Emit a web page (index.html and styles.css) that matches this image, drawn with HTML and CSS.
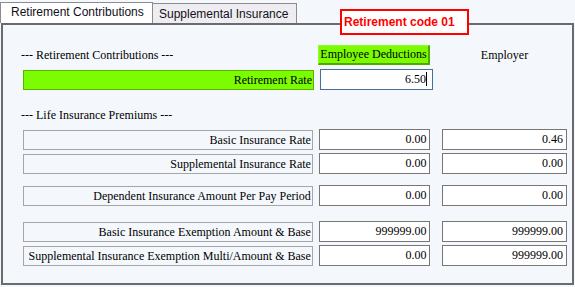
FILE: index.html
```html
<!DOCTYPE html>
<html lang="en">

<head>
    <meta charset="UTF-8">
    <title>Retirement Contributions</title>
    <link rel="stylesheet" href="styles.css">
</head>

<body>
    <div class="tabs">
        <div class="tab tab-active">Retirement Contributions</div>
        <div class="tab tab-other">Supplemental Insurance</div>
    </div>

    <div class="panel">
        <div class="row row-head">
            <div class="section-title">--- Retirement Contributions ---</div>
            <div class="col1 btn-green">Employee Deductions</div>
            <div class="col2 col-title">Employer</div>
        </div>
        <div class="row row-retire">
            <div class="label label-green">Retirement Rate</div>
            <div class="col1 field field-focus">6.50<span class="caret"></span></div>
        </div>

        <div class="section-title life-title">--- Life Insurance Premiums ---</div>

        <div class="row row-basic">
            <div class="label">Basic Insurance Rate</div>
            <div class="col1 field">0.00</div>
            <div class="col2 field">0.46</div>
        </div>
        <div class="row row-tight">
            <div class="label">Supplemental Insurance Rate</div>
            <div class="col1 field">0.00</div>
            <div class="col2 field">0.00</div>
        </div>
        <div class="row row-dep">
            <div class="label">Dependent Insurance Amount Per Pay Period</div>
            <div class="col1 field">0.00</div>
            <div class="col2 field">0.00</div>
        </div>
        <div class="row row-exempt">
            <div class="label">Basic Insurance Exemption Amount &amp; Base</div>
            <div class="col1 field">999999.00</div>
            <div class="col2 field">999999.00</div>
        </div>
        <div class="row row-tight">
            <div class="label">Supplemental Insurance Exemption Multi/Amount &amp; Base</div>
            <div class="col1 field">0.00</div>
            <div class="col2 field">999999.00</div>
        </div>
    </div>

    <div class="code-badge">Retirement code 01</div>
</body>

</html>
```

FILE: styles.css
```css
* {
    box-sizing: border-box;
}

body {
    margin: 0;
    position: relative;
    background-color: #f4f8fc;
    font-family: 'Liberation Serif', 'Times New Roman', serif;
    font-size: 12px;
    color: #000;
}

/* tabs */
.tabs {
    display: flex;
    align-items: flex-end;
    height: 23px;
}

.tab {
    font-family: 'Liberation Sans', Arial, sans-serif;
    font-size: 12px;
    color: #101020;
    white-space: nowrap;
}

.tab-active {
    width: 153px;
    height: 21px;
    padding-left: 10px;
    line-height: 19px;
    background-color: #fff;
    border-top: 1px solid #8c8c8c;
    border-left: 1px solid #8c8c8c;
    border-right: 1px solid #8c8c8c;
}

.tab-other {
    width: 144px;
    height: 20px;
    padding-left: 6px;
    padding-top: 2px;
    line-height: 17px;
    background-color: #efedf1;
    border: 1px solid #8c8c8c;
    border-left: none;
    border-bottom: none;
}

/* panel */
.panel {
    margin-left: 1px;
    width: 573px;
    height: 262px;
    border: 2px solid #6b6b6b;
    padding: 20px 5px 0 20px;
}

.row {
    display: flex;
    align-items: center;
    height: 21px;
}

.row-head {
    height: 20px;
}

.row-retire {
    margin-top: 4px;
}

.row-basic {
    margin-top: 6px;
}

.row-tight {
    margin-top: 3px;
}

.row-dep {
    margin-top: 11px;
}

.row-exempt {
    margin-top: 15px;
}

.section-title {
    width: 297px;
    margin-left: -2px;
    white-space: nowrap;
}

.life-title {
    margin-top: 17px;
    height: 16px;
    line-height: 16px;
}

.label {
    width: 291px;
    height: 20px;
    margin-right: 6px;
    padding-right: 1px;
    line-height: 18px;
    text-align: right;
    white-space: nowrap;
    border: 1px solid #a6a6a6;
}

.label-green {
    background-color: #7cfc00;
    border-color: #5ab300;
}

.col1 {
    width: 112px;
    margin-right: 12px;
}

.col2 {
    width: 125px;
}

.col-title {
    text-align: center;
}

.btn-green {
    height: 20px;
    line-height: 17px;
    text-align: center;
    white-space: nowrap;
    background-color: #7cfc00;
    border-top: 1px solid #8cff2a;
    border-left: 1px solid #8cff2a;
    border-right: 2px solid #50a800;
    border-bottom: 2px solid #50a800;
}

.field {
    height: 21px;
    padding-right: 3px;
    line-height: 19px;
    text-align: right;
    background-color: #fff;
    border: 1px solid #767676;
}

.field-focus {
    width: 113px;
    padding-right: 5px;
    border-color: #41719c;
}

.caret {
    display: inline-block;
    width: 1px;
    height: 14px;
    margin-left: 0;
    vertical-align: -3px;
    background-color: #000;
}

/* overlay badge on the tab line */
.code-badge {
    position: absolute;
    left: 340px;
    top: 9px;
    width: 129px;
    height: 26px;
    padding-left: 2px;
    line-height: 22px;
    font-family: 'Liberation Sans', Arial, sans-serif;
    font-size: 12px;
    font-weight: bold;
    color: #f00;
    background-color: #fff;
    border: 2px solid #f00;
}
```
